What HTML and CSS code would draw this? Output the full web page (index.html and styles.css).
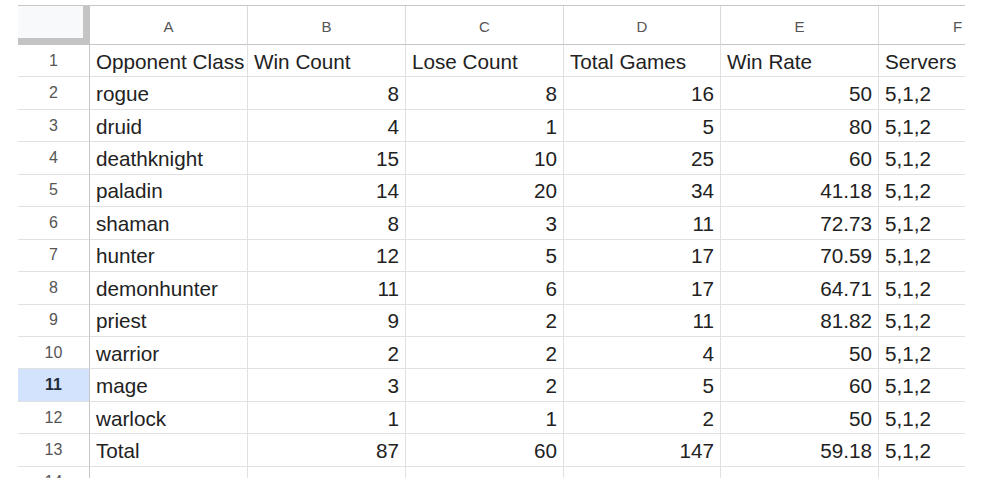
FILE: index.html
```html
<!DOCTYPE html>
<html>
<head>
<meta charset="utf-8">
<link rel="stylesheet" href="styles.css">
</head>
<body>
<div class="sheet">
  <div class="corner"></div>
  <div class="colh">A</div><div class="colh">B</div><div class="colh">C</div><div class="colh">D</div><div class="colh">E</div><div class="colh">F</div>

  <div class="rowh">1</div><div class="cell">Opponent Class</div><div class="cell">Win Count</div><div class="cell">Lose Count</div><div class="cell">Total Games</div><div class="cell">Win Rate</div><div class="cell">Servers</div>
  <div class="rowh">2</div><div class="cell">rogue</div><div class="cell num">8</div><div class="cell num">8</div><div class="cell num">16</div><div class="cell num">50</div><div class="cell">5,1,2</div>
  <div class="rowh">3</div><div class="cell">druid</div><div class="cell num">4</div><div class="cell num">1</div><div class="cell num">5</div><div class="cell num">80</div><div class="cell">5,1,2</div>
  <div class="rowh">4</div><div class="cell">deathknight</div><div class="cell num">15</div><div class="cell num">10</div><div class="cell num">25</div><div class="cell num">60</div><div class="cell">5,1,2</div>
  <div class="rowh">5</div><div class="cell">paladin</div><div class="cell num">14</div><div class="cell num">20</div><div class="cell num">34</div><div class="cell num">41.18</div><div class="cell">5,1,2</div>
  <div class="rowh">6</div><div class="cell">shaman</div><div class="cell num">8</div><div class="cell num">3</div><div class="cell num">11</div><div class="cell num">72.73</div><div class="cell">5,1,2</div>
  <div class="rowh">7</div><div class="cell">hunter</div><div class="cell num">12</div><div class="cell num">5</div><div class="cell num">17</div><div class="cell num">70.59</div><div class="cell">5,1,2</div>
  <div class="rowh">8</div><div class="cell">demonhunter</div><div class="cell num">11</div><div class="cell num">6</div><div class="cell num">17</div><div class="cell num">64.71</div><div class="cell">5,1,2</div>
  <div class="rowh">9</div><div class="cell">priest</div><div class="cell num">9</div><div class="cell num">2</div><div class="cell num">11</div><div class="cell num">81.82</div><div class="cell">5,1,2</div>
  <div class="rowh">10</div><div class="cell">warrior</div><div class="cell num">2</div><div class="cell num">2</div><div class="cell num">4</div><div class="cell num">50</div><div class="cell">5,1,2</div>
  <div class="rowh sel">11</div><div class="cell">mage</div><div class="cell num">3</div><div class="cell num">2</div><div class="cell num">5</div><div class="cell num">60</div><div class="cell">5,1,2</div>
  <div class="rowh">12</div><div class="cell">warlock</div><div class="cell num">1</div><div class="cell num">1</div><div class="cell num">2</div><div class="cell num">50</div><div class="cell">5,1,2</div>
  <div class="rowh">13</div><div class="cell">Total</div><div class="cell num">87</div><div class="cell num">60</div><div class="cell num">147</div><div class="cell num">59.18</div><div class="cell">5,1,2</div>
  <div class="rowh">14</div><div class="cell"></div><div class="cell"></div><div class="cell"></div><div class="cell"></div><div class="cell"></div><div class="cell"></div>
</div>
</body>
</html>
```
FILE: styles.css
```css
html, body {
  margin: 0;
  padding: 0;
  background: #ffffff;
}

body {
  padding: 5px 0 0 18px;
  font-family: "Liberation Sans", Arial, sans-serif;
}

.sheet {
  width: 947px;
  height: 473px;
  overflow: hidden;
  border-top: 1px solid #c7c7c7;
  display: grid;
  grid-template-columns: 72px 158px 158px 158px 157px 158px 158px;
  grid-template-rows: 39px repeat(14, 32.45px);
  box-sizing: border-box;
}

.sheet > div {
  box-sizing: border-box;
  border-right: 1px solid #e1e1e1;
  border-bottom: 1px solid #e1e1e1;
  white-space: nowrap;
  overflow: visible;
}

.corner {
  background: #f8f9fa;
  border-right: 7px solid #c4c4c4 !important;
  border-bottom: 7px solid #c4c4c4 !important;
}

.colh {
  display: flex;
  align-items: center;
  justify-content: center;
  font-size: 15px;
  color: #555555;
  padding-top: 2px;
  border-bottom-color: #c4c7c5 !important;
  border-right-color: #dadada !important;
}

.rowh {
  display: flex;
  align-items: center;
  justify-content: center;
  font-size: 16px;
  color: #555555;
  border-right-color: #c4c7c5 !important;
}

.rowh.sel {
  background: #d3e3fd;
  color: #1f2a3a;
  font-weight: bold;
}

.cell {
  display: flex;
  align-items: center;
  padding: 2px 6px 0 6px;
  font-size: 20.7px;
  color: #222222;
}

.cell.num {
  justify-content: flex-end;
}
```
